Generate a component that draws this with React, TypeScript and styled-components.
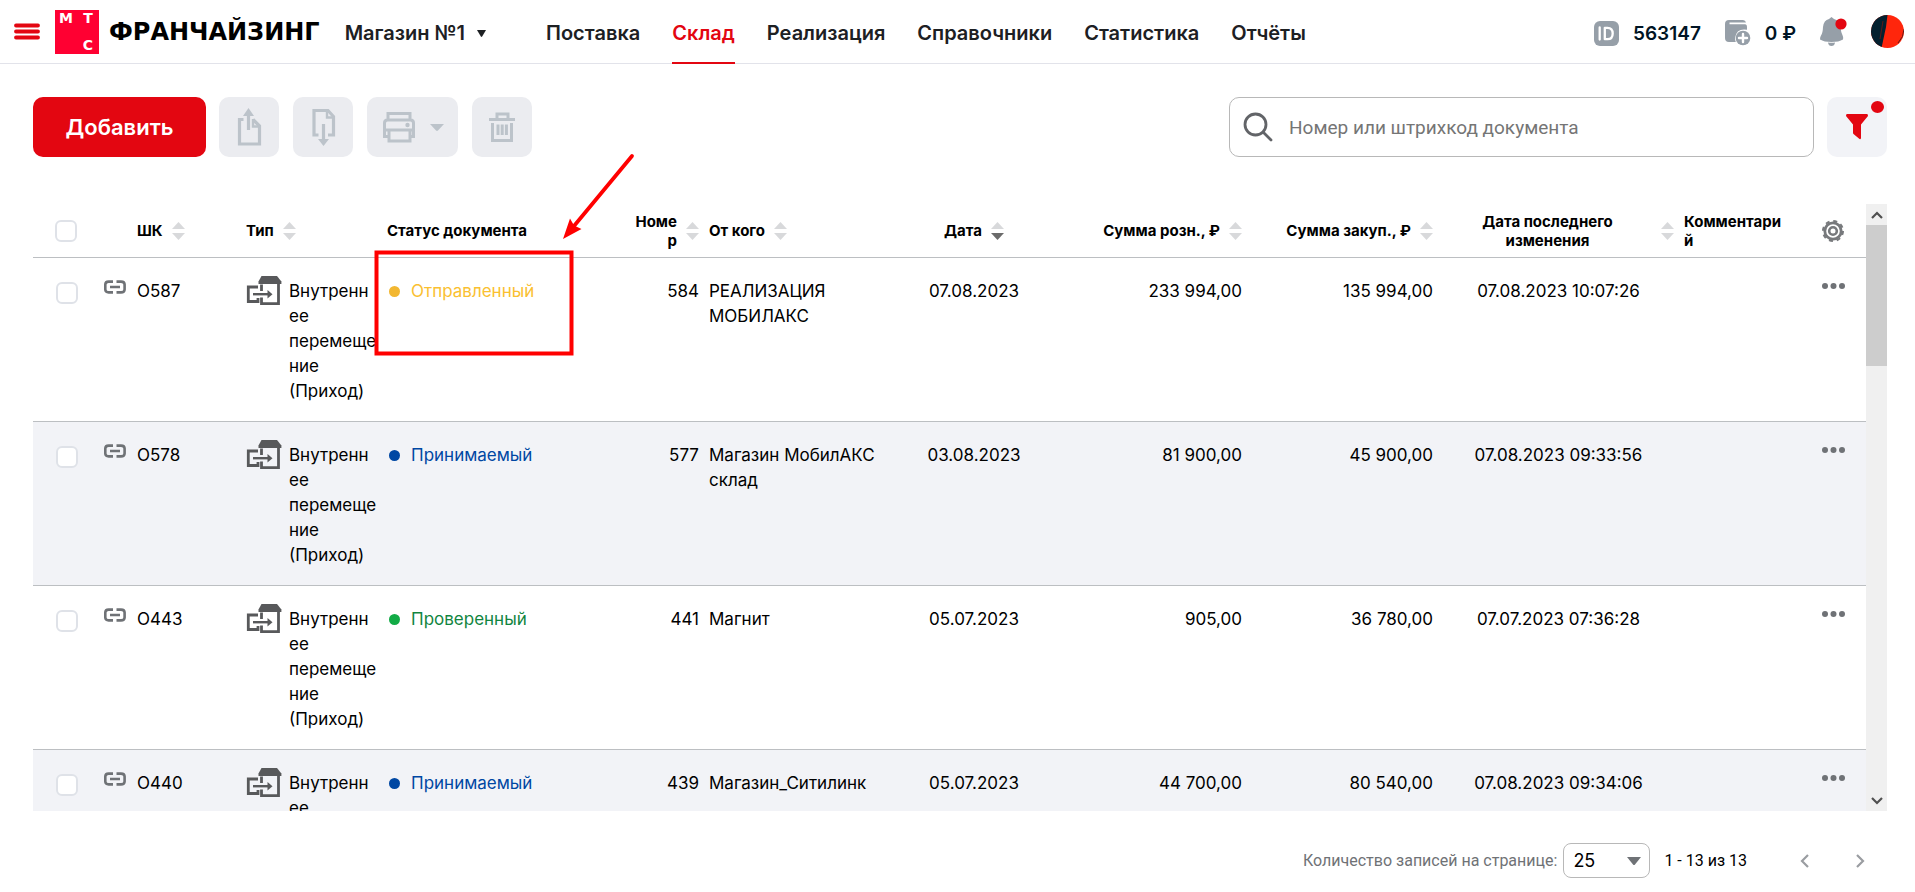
import React from "react";
import styled, { createGlobalStyle } from "styled-components";

const GlobalStyle = createGlobalStyle`
  *, *::before, *::after { box-sizing: border-box; }
  body { margin: 0; background: #fff; color: #000; font-family: Inter, "Liberation Sans", sans-serif; font-size: 17px; }
  button, input, select { font: inherit; color: inherit; margin: 0; }
  svg { display: block; flex: none; }
`;

const Page = styled.div`
  position: relative;
  min-height: 100vh;
`;

const PlainButton = styled.button`
  display: flex;
  align-items: center;
  justify-content: center;
  padding: 0;
  border: 0;
  background: none;
  cursor: pointer;
`;

/* ---------- header ---------- */

const Header = styled.header`
  display: flex;
  align-items: center;
  height: 64px;
  padding: 0 11px 0 14px;
  border-bottom: 1px solid #e2e3ea;
  color: #1d2023;
  font-size: 20px;
  font-weight: 600;
`;

const Brand = styled.a`
  display: flex;
  align-items: center;
  gap: 10px;
  margin: 0 25px 0 15px;
  color: #000;
  font-family: "DejaVu Sans", sans-serif;
  font-size: 24px;
  font-weight: 700;
  line-height: 44px;
  text-decoration: none;
`;

const LogoMark = styled.span`
  display: grid;
  grid-template-columns: 1fr 1fr;
  align-content: space-between;
  justify-items: center;
  width: 44px;
  height: 44px;
  background: #ff0032;
  color: #fff;
  font-size: 14px;
  line-height: 17px;
`;

const LogoLast = styled.span`
  grid-column: 2;
`;

const StoreButton = styled(PlainButton)`
  gap: 12px;
  padding-top: 3px;
  font-weight: 600;
`;

const Nav = styled.nav`
  display: flex;
  gap: 32px;
  height: 64px;
  margin-left: 60px;
`;

const NavLink = styled.a<{ $active?: boolean }>`
  display: flex;
  align-items: center;
  padding-top: 5px;
  border-bottom: 2px solid ${(p) => (p.$active ? "#e30611" : "transparent")};
  color: ${(p) => (p.$active ? "#e30611" : "#1d2023")};
  text-decoration: none;
`;

const Account = styled.div`
  display: flex;
  align-items: center;
  gap: 24px;
  margin-left: auto;
  color: #001424;
  font-size: 19px;
`;

const AccountItem = styled.div`
  display: flex;
  align-items: center;
  gap: 14px;
  padding-top: 3px;
`;

/* ---------- toolbar ---------- */

const Main = styled.main`
  padding: 33px 28px 0 33px;
`;

const Toolbar = styled.div`
  display: flex;
  gap: 13px;
`;

const AddButton = styled.button`
  width: 173px;
  height: 60px;
  border: 0;
  border-radius: 10px;
  background: #e30611;
  color: #fff;
  font-size: 22px;
  font-weight: 600;
`;

const ToolGroup = styled.div`
  display: flex;
  gap: 14px;
`;

const ToolButton = styled(PlainButton)<{ $wide?: boolean }>`
  gap: 14px;
  width: ${(p) => (p.$wide ? 91 : 60)}px;
  height: 60px;
  border-radius: 10px;
  background: #ebecf0;
  color: #bcc3ca;
`;

const SearchBox = styled.label`
  display: flex;
  align-items: center;
  gap: 14px;
  width: 585px;
  height: 60px;
  margin-left: auto;
  padding: 0 13px;
  border: 1px solid #b8b8b8;
  border-radius: 10px;
  color: #626c77;
`;

const SearchInput = styled.input`
  flex: 1;
  min-width: 0;
  border: 0;
  outline: 0;
  background: none;
  font-family: Roboto, sans-serif;
  font-size: 19px;
  &::placeholder { color: #757575; opacity: 1; }
`;

const FilterButton = styled(PlainButton)`
  position: relative;
  width: 60px;
  height: 60px;
  border-radius: 10px;
  background: #f2f3f7;
`;

const FilterDot = styled.span`
  position: absolute;
  top: 4px;
  right: 3px;
  width: 13px;
  height: 12px;
  border-radius: 50%;
  background: #e30611;
`;

/* ---------- table ---------- */

const TableFrame = styled.section`
  display: flex;
  height: calc(100vh - 285px);
  min-height: 300px;
  margin-top: 47px;
`;

const TableViewport = styled.div`
  flex: 1;
  min-width: 0;
  overflow: hidden;
`;

const Table = styled.table`
  width: 100%;
  border-collapse: separate;
  border-spacing: 0;
  table-layout: fixed;
`;

type Align = "left" | "center" | "right";

const HeadCell = styled.th`
  height: 54px;
  padding: 0 5px;
  border-bottom: 1px solid #bcbfc2;
  font-size: 15px;
  font-weight: 700;
  line-height: 19px;
`;

const HeadContent = styled.div<{ $align: Align }>`
  display: flex;
  align-items: center;
  justify-content: ${(p) => (p.$align === "left" ? "flex-start" : p.$align === "right" ? "flex-end" : "center")};
  gap: 9px;
  text-align: ${(p) => p.$align};
`;

const HeadText = styled.span<{ $grow?: boolean }>`
  flex: ${(p) => (p.$grow ? "1" : "0 1 auto")};
  min-width: 0;
  overflow-wrap: anywhere;
`;

const Row = styled.tr`
  background: #fff;
  &:nth-child(even) { background: #f2f3f7; }
`;

const Cell = styled.td<{ $align?: Align }>`
  height: 164px;
  padding: 21px 5px 17px;
  border-bottom: 1px solid #bcbfc2;
  line-height: 25px;
  text-align: ${(p) => p.$align ?? "left"};
  vertical-align: top;
  overflow-wrap: anywhere;
`;

const Check = styled.input`
  display: block;
  appearance: none;
  width: 22px;
  height: 22px;
  border: 2px solid #dfe2e8;
  border-radius: 6px;
  background: #fff;
`;

const CheckCell = styled(Cell)`
  padding-top: 24px;
  padding-left: 23px;
`;

const CheckHead = styled(HeadCell)`
  padding-left: 22px;
`;

const IconCell = styled(Cell)`
  padding-left: 11px;
  color: #6f7276;
`;

const StatusCell = styled(Cell)`
  padding-left: 7px;
`;

const MenuCell = styled(Cell)`
  padding-left: 15px;
`;

const MenuHead = styled(HeadCell)`
  padding-left: 15px;
`;

const TypeLine = styled.div`
  display: flex;
  gap: 7px;
  & > svg { margin-top: -3px; }
`;

const TypeText = styled.span`
  flex: 1;
  min-width: 0;
`;

const Status = styled.span<{ $color: string }>`
  display: flex;
  align-items: center;
  gap: 11px;
  color: ${(p) => p.$color};
`;

const Dot = styled.span<{ $color: string }>`
  width: 11px;
  height: 11px;
  border-radius: 50%;
  background: ${(p) => p.$color};
`;

const MenuButton = styled(PlainButton)`
  width: 100%;
  height: 14px;
  color: #6f7276;
`;

const Scrollbar = styled.div`
  display: flex;
  flex-direction: column;
  width: 21px;
  background: #f0f0f0;
`;

const ScrollButton = styled(PlainButton)`
  height: 21px;
  color: #505050;
`;

const ScrollTrack = styled.div`
  flex: 1;
`;

const ScrollThumb = styled.div`
  height: 25%;
  background: #cdcdcd;
`;

/* ---------- pagination ---------- */

const Pagination = styled.footer`
  display: flex;
  align-items: center;
  justify-content: flex-end;
  height: 35px;
  margin-top: 32px;
  padding-right: 22px;
  font-family: Roboto, sans-serif;
  font-size: 16px;
`;

const SizeLabel = styled.label`
  display: flex;
  align-items: center;
  gap: 6px;
  color: #6f7276;
`;

const SelectWrap = styled.span`
  display: grid;
  align-items: center;
  width: 87px;
  height: 35px;
  & > * { grid-area: 1 / 1; }
  & > svg { justify-self: end; margin-right: 9px; pointer-events: none; }
`;

const SizeSelect = styled.select`
  appearance: none;
  width: 100%;
  height: 100%;
  padding: 0 9px;
  border: 1px solid #b8b8b8;
  border-radius: 8px;
  background: #fff;
  color: #000;
  font-family: Inter, sans-serif;
  font-size: 18px;
`;

const Range = styled.span`
  margin: 0 53px 0 14px;
`;

const Pager = styled.div`
  display: flex;
  gap: 45px;
  color: #9a9da1;
`;

const Annotation = styled.svg`
  position: absolute;
  top: 150px;
  left: 370px;
  pointer-events: none;
`;

/* ---------- icons ---------- */

const SortIcon = ({ desc }: { desc?: boolean }) => (
  <svg width="13" height="20" viewBox="0 0 13 20" aria-hidden="true">
    <path d="M6.5 1 13 8H0z" fill="#d8d9db" />
    <path d="M6.5 19 0 12h13z" fill={desc ? "#6b6b6b" : "#d8d9db"} />
  </svg>
);

const ChainIcon = () => (
  <svg width="22" height="16" viewBox="0 0 22 16" fill="none" stroke="currentColor" strokeWidth="2.6" aria-hidden="true">
    <path d="M9 2.600H4.600Q1.300 2.600 1.300 5.600v4.800q0 3 3.300 3h4.400M12.500 2.600h4.500q3.600 0 3.600 3v4.800q0 3-3.600 3h-4.500M6 8h10" />
  </svg>
);

const TransferIcon = () => (
  <svg width="36" height="30" viewBox="0 0 36 30" fill="none" stroke="#58595b" strokeWidth="2.8" aria-hidden="true">
    <path d="M12 11H2.300v14.500H12v-3.500M15.500 8.500V15M15.500 21.500v6.200h17V7" />
    <path d="M7 18.200h17" strokeWidth="2.400" />
    <path d="m21.500 14 5 4.200-5 4.200z" fill="#58595b" stroke="none" />
    <path d="M15.500 0h15.500l4.400 5.500V8H12.500V5.500z" fill="#58595b" stroke="none" />
  </svg>
);

const DotsIcon = () => (
  <svg width="23" height="6" viewBox="0 0 23 6" fill="currentColor" aria-hidden="true">
    <circle cx="3" cy="3" r="3" />
    <circle cx="11.500" cy="3" r="3" />
    <circle cx="20" cy="3" r="3" />
  </svg>
);

const GearIcon = () => (
  <svg width="22" height="22" viewBox="0 0 22 22" fill="none" stroke="#77797c" aria-hidden="true">
    <circle cx="11" cy="11" r="8.200" strokeWidth="2.800" />
    <circle cx="11" cy="11" r="10" strokeWidth="2" strokeDasharray="4 3.850" />
    <circle cx="11" cy="11" r="3.800" strokeWidth="2.600" />
  </svg>
);

const BurgerIcon = () => (
  <svg width="26" height="17" viewBox="0 0 26 17" aria-hidden="true">
    <path d="M2 2.500h22M2 8.500h22M2 14.500h22" stroke="#e30611" strokeWidth="3.800" strokeLinecap="round" />
  </svg>
);

const ExportIcon = () => (
  <svg width="26" height="38" viewBox="0 0 26 38" fill="none" stroke="currentColor" strokeWidth="3.200" aria-hidden="true">
    <path d="M7.500 11.500H3.500V36h20V18L17 11.500M12.500 22V7" />
    <path d="M12.500 0 18 8H7z" fill="currentColor" stroke="none" />
    <path d="M17 11v7.500h6.500" strokeWidth="2.400" />
  </svg>
);

const ImportIcon = () => (
  <svg width="26" height="38" viewBox="0 0 26 38" fill="none" stroke="currentColor" strokeWidth="3.200" aria-hidden="true">
    <path d="M8.500 27H4V2.500h14l5.500 6V27H18M13.500 16v15" />
    <path d="M13.500 38 8 31h11z" fill="currentColor" stroke="none" />
    <path d="M17 3v6.500h6.500" strokeWidth="2.400" />
  </svg>
);

const PrintIcon = () => (
  <svg width="34" height="32" viewBox="0 0 34 32" fill="none" stroke="currentColor" strokeWidth="3" aria-hidden="true">
    <path d="M6 9V2.500h22V9M6 25.500H2.500V12q0-3 3-3h23q3 0 3 3v13.500H28M2 19h30M7 19v11h21V19" />
    <circle cx="25.500" cy="14" r="2.200" fill="currentColor" stroke="none" />
  </svg>
);

const TrashIcon = () => (
  <svg width="28" height="30" viewBox="0 0 28 30" fill="none" stroke="currentColor" strokeWidth="3" aria-hidden="true">
    <path d="M1 7.500h26M9 7V2h11v5M4.500 11v17.500h19V11M10 12.500V23M14.200 12.500V23M18.400 12.500V23" />
  </svg>
);

const CaretIcon = ({ width, height, color = "currentColor" }: { width: number; height: number; color?: string }) => (
  <svg width={width} height={height} viewBox="0 0 14 8" preserveAspectRatio="none" fill={color} aria-hidden="true">
    <path d="M0 0h14L8 7.500Q7 8.500 6 7.500z" />
  </svg>
);

const SearchIcon = () => (
  <svg width="30" height="30" viewBox="0 0 30 30" fill="none" stroke="#626468" strokeWidth="2.800" strokeLinecap="round" aria-hidden="true">
    <circle cx="12.500" cy="12.500" r="10.500" />
    <path d="m20.500 20.500 7.500 7.500" />
  </svg>
);

const FunnelIcon = () => (
  <svg width="22" height="26" viewBox="0 0 22 26" fill="#e30611" aria-hidden="true">
    <path d="M1 0h20q1 0 1 2l-7 8.500V24q0 1.500-1.500 1L7.500 20q-.500-.500-.500-1.500v-8L0 2Q0 0 1 0z" />
  </svg>
);

const IdIcon = () => (
  <svg width="25" height="25" viewBox="0 0 25 25" fill="none" aria-hidden="true">
    <rect width="25" height="25" rx="6" fill="#969fa8" />
    <path d="M5.700 6.500v12M10.800 6.800h2.700q5.200 0 5.200 5.700t-5.200 5.700h-2.700z" stroke="#fff" strokeWidth="2.300" strokeLinejoin="round" strokeLinecap="round" />
  </svg>
);

const WalletIcon = () => (
  <svg width="26" height="26" viewBox="0 0 26 26" aria-hidden="true">
    <path d="M4 0h14q2.500 0 3 2.500H4.500v1.800H20q2 0 2 3v2.500Q11.500 8 10 18q0 2 .8 4H4q-4 0-4-4V4q0-4 4-4z" fill="#969fa8" />
    <circle cx="18" cy="18" r="7.300" fill="#969fa8" />
    <path d="M18 14v8M14 18h8" stroke="#fff" strokeWidth="2.400" strokeLinecap="round" />
  </svg>
);

const BellIcon = () => (
  <svg width="27" height="30" viewBox="0 0 27 30" aria-hidden="true">
    <path d="M11.500 0 14 2q5.500 1 6.500 8 .500 6 2.300 9 .700 1.500.200 3.500-4 2.500-11.500 2.500T0 22.500Q0 20 1 18.500q1.800-2.500 2-8.500.800-7 6-8zM8 25.500q3.500.500 7 0-.500 3.500-3.500 3.500T8 25.500z" fill="#969fa8" />
    <circle cx="21" cy="7" r="5.600" fill="#e30611" />
  </svg>
);

const Avatar = () => (
  <svg width="33" height="33" viewBox="0 0 33 33" aria-hidden="true">
    <defs>
      <clipPath id="avatar-disc"><circle cx="16.500" cy="16.500" r="16.500" /></clipPath>
    </defs>
    <g clipPath="url(#avatar-disc)">
      <path d="M0 0h33v33H0z" fill="#ff260c" />
      <path d="M0 0h16.500L15 12l-4.500 21H0z" fill="#04202f" />
      <path d="M12 6 9 24M33 14q0 8-6 14" stroke="#5c1a18" fill="none" />
    </g>
  </svg>
);

const Chevron = ({ d, width = 10, height = 14 }: { d: string; width?: number; height?: number }) => (
  <svg width={width} height={height} viewBox={`0 0 ${width} ${height}`} fill="none" stroke="currentColor" strokeWidth="2.200" aria-hidden="true">
    <path d={d} />
  </svg>
);

/* ---------- data ---------- */

interface Column {
  title: string;
  width: number;
  align: Align;
  sort?: "none" | "desc";
  grow?: boolean;
}

const columns: Column[] = [
  { title: "ШК", width: 109, align: "left", sort: "none" },
  { title: "Тип", width: 141, align: "left", sort: "none" },
  { title: "Статус документа", width: 247, align: "left" },
  { title: "Номер", width: 75, align: "right", sort: "none" },
  { title: "От кого", width: 176, align: "left", sort: "none" },
  { title: "Дата", width: 188, align: "center", sort: "desc" },
  { title: "Сумма розн., ₽", width: 179, align: "right", sort: "none" },
  { title: "Сумма закуп., ₽", width: 191, align: "right", sort: "none" },
  { title: "Дата последнего изменения", width: 241, align: "center", sort: "none", grow: true },
  { title: "Комментарий", width: 111, align: "left" },
];

const statusColors = {
  Отправленный: { dot: "#f2b731", text: "#fac031" },
  Принимаемый: { dot: "#0047a3", text: "#0047a3" },
  Проверенный: { dot: "#12ab46", text: "#12853f" },
};

interface Doc {
  code: string;
  status: keyof typeof statusColors;
  number: string;
  from: string;
  date: string;
  retail: string;
  purchase: string;
  changed: string;
}

const docs: Doc[] = [
  { code: "О587", status: "Отправленный", number: "584", from: "РЕАЛИЗАЦИЯ МОБИЛАКС", date: "07.08.2023", retail: "233 994,00", purchase: "135 994,00", changed: "07.08.2023 10:07:26" },
  { code: "О578", status: "Принимаемый", number: "577", from: "Магазин МобилАКС склад", date: "03.08.2023", retail: "81 900,00", purchase: "45 900,00", changed: "07.08.2023 09:33:56" },
  { code: "О443", status: "Проверенный", number: "441", from: "Магнит", date: "05.07.2023", retail: "905,00", purchase: "36 780,00", changed: "07.07.2023 07:36:28" },
  { code: "О440", status: "Принимаемый", number: "439", from: "Магазин_Ситилинк", date: "05.07.2023", retail: "44 700,00", purchase: "80 540,00", changed: "07.08.2023 09:34:06" },
];

const navItems = ["Поставка", "Склад", "Реализация", "Справочники", "Статистика", "Отчёты"];

export default function App() {
  return (
    <Page>
      <GlobalStyle />
      <Header>
        <PlainButton aria-label="Меню"><BurgerIcon /></PlainButton>
        <Brand href="#">
          <LogoMark><span>М</span><span>Т</span><LogoLast>С</LogoLast></LogoMark>
          ФРАНЧАЙЗИНГ
        </Brand>
        <StoreButton>Магазин №1 <CaretIcon width={9} height={7} /></StoreButton>
        <Nav>
          {navItems.map((item) => (
            <NavLink key={item} href="#" $active={item === "Склад"}>{item}</NavLink>
          ))}
        </Nav>
        <Account>
          <AccountItem><IdIcon />563147</AccountItem>
          <AccountItem><WalletIcon />0 ₽</AccountItem>
          <PlainButton aria-label="Уведомления"><BellIcon /></PlainButton>
          <PlainButton aria-label="Профиль"><Avatar /></PlainButton>
        </Account>
      </Header>

      <Main>
        <Toolbar>
          <AddButton>Добавить</AddButton>
          <ToolGroup>
            <ToolButton aria-label="Выгрузить"><ExportIcon /></ToolButton>
            <ToolButton aria-label="Загрузить"><ImportIcon /></ToolButton>
            <ToolButton $wide aria-label="Печать"><PrintIcon /><CaretIcon width={14} height={7} /></ToolButton>
            <ToolButton aria-label="Удалить"><TrashIcon /></ToolButton>
          </ToolGroup>
          <SearchBox>
            <SearchIcon />
            <SearchInput placeholder="Номер или штрихкод документа" aria-label="Номер или штрихкод документа" />
          </SearchBox>
          <FilterButton aria-label="Фильтр"><FunnelIcon /><FilterDot /></FilterButton>
        </Toolbar>

        <TableFrame>
          <TableViewport>
            <Table>
              <colgroup>
                <col width={60} />
                <col width={39} />
                {columns.map((c) => <col key={c.title} width={c.width} />)}
                <col width={76} />
              </colgroup>
              <thead>
                <tr>
                  <CheckHead><Check type="checkbox" aria-label="Выбрать все" /></CheckHead>
                  <HeadCell />
                  {columns.map((c) => (
                    <HeadCell key={c.title} scope="col">
                      <HeadContent $align={c.align}>
                        <HeadText $grow={c.grow}>{c.title}</HeadText>
                        {c.sort && <SortIcon desc={c.sort === "desc"} />}
                      </HeadContent>
                    </HeadCell>
                  ))}
                  <MenuHead><MenuButton aria-label="Настройки таблицы"><GearIcon /></MenuButton></MenuHead>
                </tr>
              </thead>
              <tbody>
                {docs.map((d) => (
                  <Row key={d.code}>
                    <CheckCell><Check type="checkbox" aria-label={`Выбрать ${d.code}`} /></CheckCell>
                    <IconCell><ChainIcon /></IconCell>
                    <Cell>{d.code}</Cell>
                    <Cell>
                      <TypeLine><TransferIcon /><TypeText>Внутреннее перемещение (Приход)</TypeText></TypeLine>
                    </Cell>
                    <StatusCell>
                      <Status $color={statusColors[d.status].text}>
                        <Dot $color={statusColors[d.status].dot} />{d.status}
                      </Status>
                    </StatusCell>
                    <Cell $align="right">{d.number}</Cell>
                    <Cell>{d.from}</Cell>
                    <Cell $align="center">{d.date}</Cell>
                    <Cell $align="right">{d.retail}</Cell>
                    <Cell $align="right">{d.purchase}</Cell>
                    <Cell $align="center">{d.changed}</Cell>
                    <Cell />
                    <MenuCell><MenuButton aria-label="Действия"><DotsIcon /></MenuButton></MenuCell>
                  </Row>
                ))}
              </tbody>
            </Table>
          </TableViewport>
          <Scrollbar>
            <ScrollButton aria-label="Вверх"><Chevron width={12} height={8} d="m1 7 5-5 5 5" /></ScrollButton>
            <ScrollTrack><ScrollThumb /></ScrollTrack>
            <ScrollButton aria-label="Вниз"><Chevron width={12} height={8} d="m1 1 5 5 5-5" /></ScrollButton>
          </Scrollbar>
        </TableFrame>

        <Pagination>
          <SizeLabel>
            Количество записей на странице:
            <SelectWrap>
              <SizeSelect defaultValue="25"><option>25</option><option>50</option></SizeSelect>
              <CaretIcon width={14} height={8} color="#6f7276" />
            </SelectWrap>
          </SizeLabel>
          <Range>1 - 13 из 13</Range>
          <Pager>
            <PlainButton aria-label="Назад"><Chevron d="M8 1 2 7l6 6" /></PlainButton>
            <PlainButton aria-label="Вперёд"><Chevron d="m2 1 6 6-6 6" /></PlainButton>
          </Pager>
        </Pagination>
      </Main>

      <Annotation width="270" height="210" viewBox="0 0 270 210" fill="none" stroke="#ff0000" aria-hidden="true">
        <rect x="6.500" y="102.500" width="195" height="101" strokeWidth="4" />
        <path d="M262 6 204 76" strokeWidth="3.800" strokeLinecap="round" />
        <path d="m193 89 7-20.500 4 7 7.500 3.500z" fill="#ff0000" stroke="none" />
      </Annotation>
    </Page>
  );
}
